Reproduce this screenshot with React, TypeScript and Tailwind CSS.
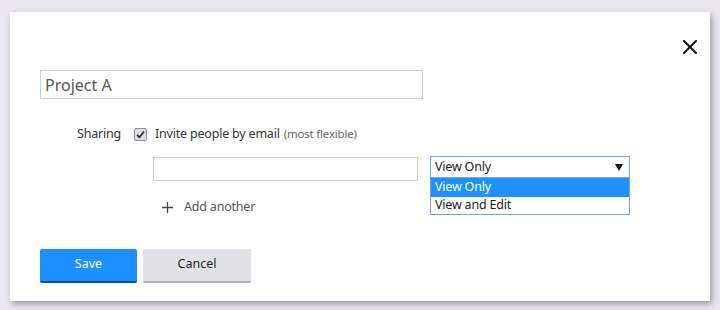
import { useState } from "react";

const font = "font-['Segoe_UI','Noto_Sans','Open_Sans',sans-serif]";

function CloseIcon() {
  return (
    <svg width="14" height="14" viewBox="0 0 14 14" className="block">
      <path d="M1 1 L13 13 M13 1 L1 13" stroke="#111" strokeWidth="2" strokeLinecap="square" />
    </svg>
  );
}

function Checkbox() {
  return (
    <span className="flex h-[13px] w-[13px] items-center justify-center rounded-[2px] border border-[#8f8f9d] bg-[#dcdce0]">
      <svg width="9" height="9" viewBox="0 0 9 9">
        <path d="M1 4.8 L3.4 7.2 L8 1.6" fill="none" stroke="#333" strokeWidth="1.8" />
      </svg>
    </span>
  );
}

export default function App() {
  const [title, setTitle] = useState("Project A");
  const options = ["View Only", "View and Edit"];

  return (
    <div className={`h-[310px] w-[720px] overflow-hidden bg-[#e9e6ee] pl-[10px] pt-[12px] ${font}`}>
      <div className="relative flex h-[289px] w-[700px] flex-col bg-white pl-[30px] shadow-[2px_3px_6px_rgba(60,55,75,0.45)]">
        {/* Close */}
        <div className="flex justify-end pr-[13px] pt-[28px]">
          <button className="block">
            <CloseIcon />
          </button>
        </div>

        {/* Title */}
        <input
          value={title}
          onChange={(e) => setTitle(e.target.value)}
          className="mt-[16px] h-[29px] w-[383px] border border-[#d0d0d0] px-[4px] text-[16px] text-[#555] outline-none"
        />

        {/* Sharing */}
        <div className="mt-[26px] flex h-[18px] items-center text-[12.5px] tracking-[-0.2px] text-[#333]">
          <span className="ml-[37px] w-[57px]">Sharing</span>
          <Checkbox />
          <span className="ml-[8px]">Invite people by email</span>
          <span className="ml-[4px] text-[11.5px] text-[#666]">(most flexible)</span>
        </div>

        {/* Email + permission */}
        <div className="mt-[13px] flex items-start pl-[113px]">
          <input className="mt-[1px] h-[24px] w-[265px] border border-[#d0d0d0] outline-none" />
          <div className="relative ml-[12px] w-[200px] text-[12.5px] tracking-[-0.2px]">
            <div className="flex h-[22px] items-center justify-between border border-[#7f9fd6] pl-[4px] pr-[6px] text-[#222]">
              <span>View Only</span>
              <svg width="8" height="7" viewBox="0 0 8 7">
                <path d="M0 0 H8 L4 7 Z" fill="#111" />
              </svg>
            </div>
            <div className="absolute left-0 top-[21px] w-[200px] border border-[#7f9fd6] bg-white">
              {options.map((o, i) => (
                <div
                  key={o}
                  className={
                    i === 0
                      ? "flex h-[19px] items-center bg-[#1e90ff] pl-[4px] text-white"
                      : "flex h-[17px] items-center pl-[4px] text-[#222]"
                  }
                >
                  {o}
                </div>
              ))}
            </div>
          </div>
        </div>

        {/* Add another */}
        <div className="mt-[17px] flex items-center pl-[122px] text-[12.5px] tracking-[-0.2px] text-[#555]">
          <svg width="11" height="11" viewBox="0 0 11 11">
            <path d="M5.5 0 V11 M0 5.5 H11" stroke="#444" strokeWidth="1.3" />
          </svg>
          <span className="ml-[11px]">Add another</span>
        </div>

        {/* Buttons */}
        <div className="mt-[32px] flex gap-[6px] text-[12.5px]">
          <button className="h-[34px] w-[97px] rounded-[2px] border-b-[2px] border-[#0a4fa8] bg-[#1e8fff] text-white">
            Save
          </button>
          <button className="h-[34px] w-[108px] rounded-[2px] border-b-[2px] border-[#b0b0b8] bg-[#e1e1e5] text-[#222]">
            Cancel
          </button>
        </div>
      </div>
    </div>
  );
}
